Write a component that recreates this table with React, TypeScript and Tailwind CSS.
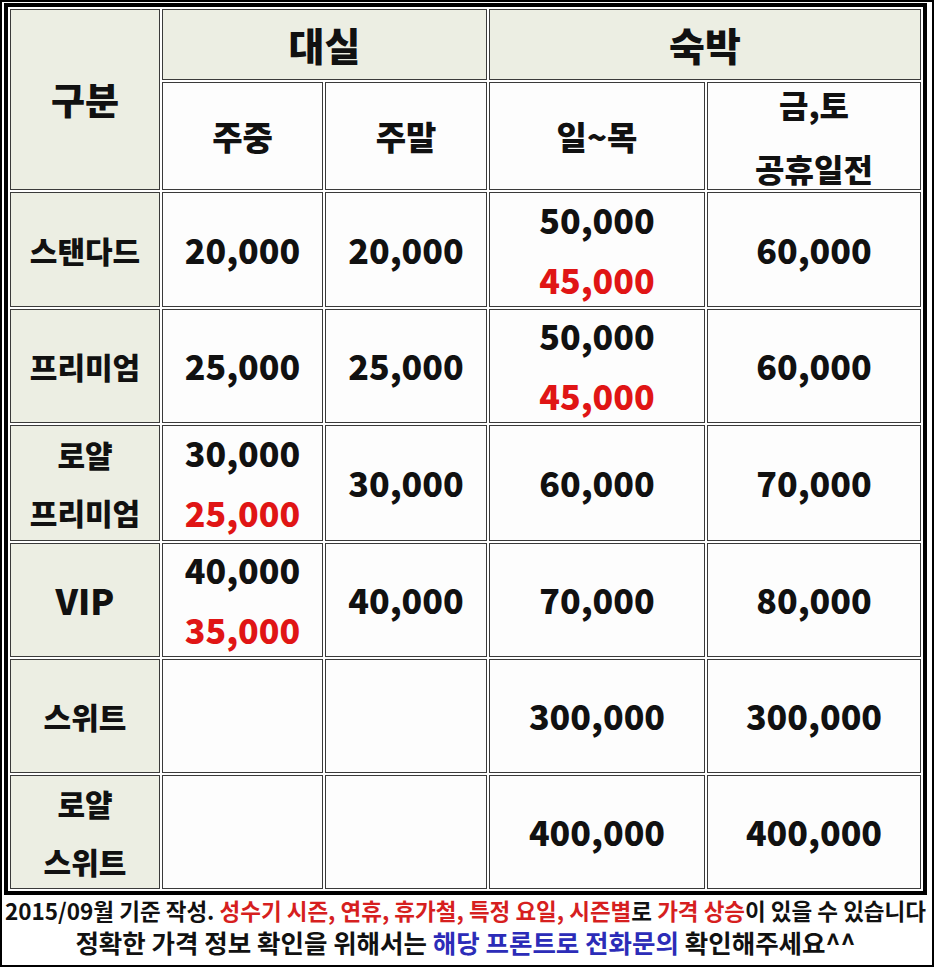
import React from "react";

type Line = { t: string; red?: boolean };

const cellBase =
  "border border-[#3a3a3a] flex flex-col items-center justify-center text-[#111]";
const headBg = "bg-[#eceee3]";
const whiteBg = "bg-[#fdfdfd]";

function Num({ lines }: { lines: Line[] }) {
  return (
    <div className={`${cellBase} ${whiteBg}`}>
      {lines.map((l, i) => (
        <div
          key={i}
          className={`text-[34px] font-black leading-[60px] ${
            l.red ? "text-[#e01515]" : "text-[#111]"
          }`}
        >
          {l.t}
        </div>
      ))}
    </div>
  );
}

function Label({ lines }: { lines: string[] }) {
  return (
    <div className={`${cellBase} ${headBg}`}>
      {lines.map((l, i) => (
        <div
          key={i}
          className={`${l === "VIP" ? "text-[35px]" : "text-[30px]"} font-black leading-[58px]`}
        >
          {l}
        </div>
      ))}
    </div>
  );
}

const rows: { label: string[]; cells: Line[][] }[] = [
  {
    label: ["스탠다드"],
    cells: [
      [{ t: "20,000" }],
      [{ t: "20,000" }],
      [{ t: "50,000" }, { t: "45,000", red: true }],
      [{ t: "60,000" }],
    ],
  },
  {
    label: ["프리미엄"],
    cells: [
      [{ t: "25,000" }],
      [{ t: "25,000" }],
      [{ t: "50,000" }, { t: "45,000", red: true }],
      [{ t: "60,000" }],
    ],
  },
  {
    label: ["로얄", "프리미엄"],
    cells: [
      [{ t: "30,000" }, { t: "25,000", red: true }],
      [{ t: "30,000" }],
      [{ t: "60,000" }],
      [{ t: "70,000" }],
    ],
  },
  {
    label: ["VIP"],
    cells: [
      [{ t: "40,000" }, { t: "35,000", red: true }],
      [{ t: "40,000" }],
      [{ t: "70,000" }],
      [{ t: "80,000" }],
    ],
  },
  {
    label: ["스위트"],
    cells: [[], [], [{ t: "300,000" }], [{ t: "300,000" }]],
  },
  {
    label: ["로얄", "스위트"],
    cells: [[], [], [{ t: "400,000" }], [{ t: "400,000" }]],
  },
];

export default function App() {
  return (
    <div className="w-[936px] h-[967px] bg-white font-['Noto_Sans_CJK_KR',sans-serif]">
      <div className="w-[934px] h-[967px] border-2 border-black bg-white pt-[1px] pl-[2px] flex flex-col">
        <div className="w-[923px] border-4 border-black bg-white p-[2px] grid grid-cols-[150px_161px_162px_216px_214px] grid-rows-[71px_108px_115px_114px_116px_114px_114px_114px] gap-[2px]">
          <div className={`${cellBase} ${headBg} row-span-2`}>
            <div className="text-[37px] font-black leading-none">구분</div>
          </div>
          <div className={`${cellBase} ${headBg} col-span-2`}>
            <div className="text-[39px] font-black leading-none">대실</div>
          </div>
          <div className={`${cellBase} ${headBg} col-span-2`}>
            <div className="text-[39px] font-black leading-none">숙박</div>
          </div>
          <div className={`${cellBase} ${whiteBg}`}>
            <div className="text-[33px] font-black leading-none">주중</div>
          </div>
          <div className={`${cellBase} ${whiteBg}`}>
            <div className="text-[33px] font-black leading-none">주말</div>
          </div>
          <div className={`${cellBase} ${whiteBg}`}>
            <div className="text-[33px] font-black leading-none">일~목</div>
          </div>
          <div className={`${cellBase} ${whiteBg}`}>
            <div className="text-[32px] font-black leading-[64px]">금,토</div>
            <div className="text-[32px] font-black leading-[64px]">공휴일전</div>
          </div>
          {rows.map((r, i) => (
            <React.Fragment key={i}>
              <Label lines={r.label} />
              {r.cells.map((c, j) => (
                <Num key={j} lines={c} />
              ))}
            </React.Fragment>
          ))}
        </div>
        <div className="w-[923px] text-center text-[22.5px] font-bold leading-[30px] text-[#111] whitespace-nowrap">
          2015/09월 기준 작성.{" "}
          <span className="text-[#d61f1f]">
            성수기 시즌, 연휴, 휴가철, 특정 요일, 시즌별
          </span>
          로 <span className="text-[#d61f1f]">가격 상승</span>이 있을 수
          있습니다
        </div>
        <div className="w-[923px] text-center text-[25.5px] font-bold leading-[34px] text-[#111] whitespace-nowrap">
          정확한 가격 정보 확인을 위해서는{" "}
          <span className="text-[#2c2cb8]">해당 프론트로 전화문의</span>{" "}
          확인해주세요^^
        </div>
      </div>
    </div>
  );
}
